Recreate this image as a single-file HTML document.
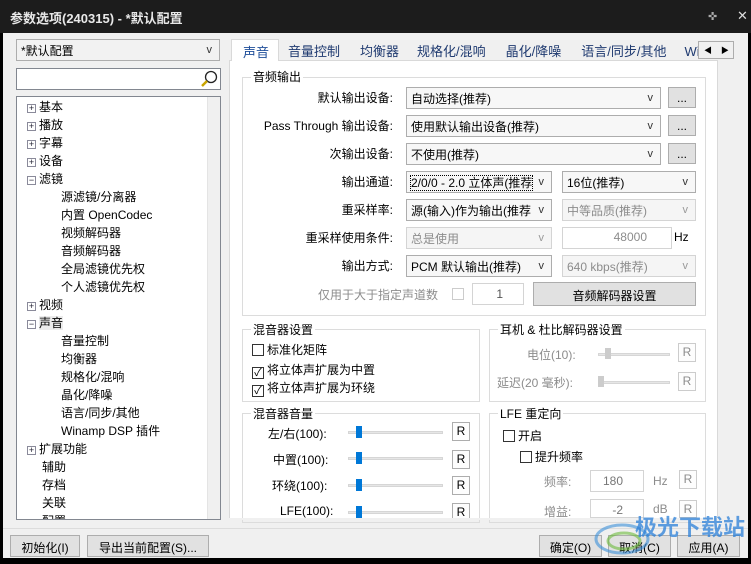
<!DOCTYPE html><html><head><meta charset="utf-8"><style>
*{box-sizing:border-box;margin:0;padding:0}
body{width:751px;height:564px;background:#000;font-family:"Liberation Sans","Noto Sans CJK SC",sans-serif;font-size:12px;color:#000;position:relative;overflow:hidden}
.a{position:absolute}
.win{left:3px;top:33px;width:745px;height:525px;background:#f0f0f0}
.title{left:0;top:0;width:751px;height:33px;background:#1c1c1c;color:#e8e8e8;font-weight:bold;font-size:13px;padding:8px 0 0 10px}
.box{background:#fff;border:1px solid #adadad}
.cb{background:#f7f7f7;border:1px solid #adadad;padding:2px 4px;white-space:nowrap;overflow:hidden}
.cb.d{color:#8c8c8c;border-color:#d4d4d4;background:#f5f5f5}
.cb .v{position:absolute;right:7px;top:4px;font-size:11px;color:#333}
.btn{background:#e1e1e1;border:1px solid #adadad;text-align:center;padding-top:3px}
.grp{border:1px solid #dcdcdc}
.gl{position:absolute;top:-9px;left:8px;background:#fff;padding:0 2px}
.lbl{text-align:right;width:160px}
.dis{color:#8c8c8c}
.chk{display:inline-block;width:12px;height:12px;border:1px solid #333;background:#fff;vertical-align:-2px;margin-right:3px;font-size:11px;line-height:10px;text-align:center}
.tr div{height:18px;line-height:18px;white-space:nowrap}
.pm{display:inline-block;width:9px;height:9px;border:1px solid #8a8a9a;font-size:9px;line-height:7px;text-align:center;color:#223;margin:0 3px 0 10px;vertical-align:0px}
.sl{height:3px;background:#e6e6e6;border:1px solid #d6d6d6}
.th{width:6px;height:12px;background:#0078d7}
.r{width:18px;height:19px;border:1px solid #adadad;background:#fdfdfd;text-align:center;line-height:17px}
</style></head><body>
<div class="a title">参数选项(240315) - *默认配置</div>
<div class="a" style="left:708px;top:10px;color:#aaa;font-size:11px">✜</div>
<div class="a" style="left:737px;top:8px;color:#ddd;font-size:13px">✕</div>
<div class="a win"></div>
<!-- left -->
<div class="a cb" style="left:16px;top:39px;width:204px;height:22px;background:#f2f2f2">*默认配置<span class="v">v</span></div>
<div class="a box" style="left:16px;top:68px;width:205px;height:22px;border-color:#828790"><svg class="a" style="right:2px;top:1px" width="18" height="18"><circle cx="11" cy="7" r="5.5" fill="none" stroke="#222" stroke-width="1.3"/><path d="M7 11 L2 16" stroke="#c9a400" stroke-width="2.5"/></svg></div>
<div class="a box tr" style="left:16px;top:96px;width:205px;height:424px;border-color:#828790;overflow:hidden;padding-top:1px">
<div><span class="pm">+</span>基本</div><div><span class="pm">+</span>播放</div><div><span class="pm">+</span>字幕</div><div><span class="pm">+</span>设备</div><div><span class="pm">−</span>滤镜</div>
<div style="padding-left:44px">源滤镜/分离器</div><div style="padding-left:44px">内置 OpenCodec</div><div style="padding-left:44px">视频解码器</div><div style="padding-left:44px">音频解码器</div><div style="padding-left:44px">全局滤镜优先权</div><div style="padding-left:44px">个人滤镜优先权</div>
<div><span class="pm">+</span>视频</div><div><span class="pm">−</span><span style="background:#ececec">声音</span></div>
<div style="padding-left:44px">音量控制</div><div style="padding-left:44px">均衡器</div><div style="padding-left:44px">规格化/混响</div><div style="padding-left:44px">晶化/降噪</div><div style="padding-left:44px">语言/同步/其他</div><div style="padding-left:44px">Winamp DSP 插件</div>
<div><span class="pm">+</span>扩展功能</div><div style="padding-left:25px">辅助</div><div style="padding-left:25px">存档</div><div style="padding-left:25px">关联</div><div style="padding-left:25px">配置</div>
<div class="a" style="right:0;top:0;width:13px;height:422px;background:#f0f0f0;border-left:1px solid #e4e4e4"></div>
</div>
<!-- tabs -->
<div class="a" style="left:229px;top:60px;width:489px;height:459px;background:#fff;border:1px solid #d9d9d9"></div>
<div class="a" style="left:231px;top:39px;width:48px;height:22px;background:#fff;border:1px solid #d9d9d9;border-bottom:none;padding:2px 0 0 11px;color:#1f4e9a;font-size:13px">声音</div>
<div class="a" style="left:288px;top:41px;font-size:13px;color:#1f3a70;white-space:nowrap;word-spacing:0"><span>音量控制</span><span style="margin-left:20px">均衡器</span><span style="margin-left:18px">规格化/混响</span><span style="margin-left:20px">晶化/降噪</span><span style="margin-left:20px">语言/同步/其他</span><span style="margin-left:18px">Wi</span></div>
<div class="a" style="left:698px;top:41px;width:36px;height:18px;background:#f0f0f0;border:1px solid #adadad;font-size:8px;padding:3px 0 0 5px">◀&nbsp;&nbsp;&nbsp;&nbsp;▶</div>
<div class="a" style="left:720px;top:62px;width:13px;height:456px;background:#f0f0f0"></div>
<!-- audio out group -->
<div class="a grp" style="left:242px;top:77px;width:464px;height:239px"><span class="gl" style="top:-10px">音频输出</span></div>
<div class="a lbl" style="left:233px;top:89px">默认输出设备:</div>
<div class="a lbl" style="left:233px;top:117px">Pass Through 输出设备:</div>
<div class="a lbl" style="left:233px;top:145px">次输出设备:</div>
<div class="a lbl" style="left:233px;top:173px">输出通道:</div>
<div class="a lbl" style="left:233px;top:201px">重采样率:</div>
<div class="a lbl" style="left:233px;top:229px">重采样使用条件:</div>
<div class="a lbl" style="left:233px;top:257px">输出方式:</div>
<div class="a cb" style="left:406px;top:87px;width:255px;height:22px">自动选择(推荐)<span class="v">v</span></div>
<div class="a cb" style="left:406px;top:115px;width:255px;height:22px">使用默认输出设备(推荐)<span class="v">v</span></div>
<div class="a cb" style="left:406px;top:143px;width:255px;height:22px">不使用(推荐)<span class="v">v</span></div>
<div class="a btn" style="left:668px;top:87px;width:28px;height:21px">...</div>
<div class="a btn" style="left:668px;top:115px;width:28px;height:21px">...</div>
<div class="a btn" style="left:668px;top:143px;width:28px;height:21px">...</div>
<div class="a cb" style="left:406px;top:171px;width:146px;height:22px"><span style="outline:1px dotted #000">2/0/0 - 2.0 立体声(推荐</span><span class="v" style="background:#f7f7f7;padding-left:6px">v</span></div>
<div class="a cb" style="left:562px;top:171px;width:134px;height:22px">16位(推荐)<span class="v">v</span></div>
<div class="a cb" style="left:406px;top:199px;width:146px;height:22px">源(输入)作为输出(推荐<span class="v" style="background:#f7f7f7;padding-left:6px">v</span></div>
<div class="a cb d" style="left:562px;top:199px;width:134px;height:22px">中等品质(推荐)<span class="v" style="color:#999">v</span></div>
<div class="a cb d" style="left:406px;top:227px;width:146px;height:22px">总是使用<span class="v" style="color:#999">v</span></div>
<div class="a cb d" style="left:562px;top:227px;width:110px;height:22px;background:#fff;text-align:right;padding-right:24px">48000</div>
<div class="a" style="left:674px;top:230px">Hz</div>
<div class="a cb" style="left:406px;top:255px;width:146px;height:22px">PCM 默认输出(推荐)<span class="v">v</span></div>
<div class="a cb d" style="left:562px;top:255px;width:134px;height:22px">640 kbps(推荐)<span class="v" style="color:#999">v</span></div>
<div class="a dis" style="left:318px;top:286px">仅用于大于指定声道数</div>
<div class="a" style="left:452px;top:288px;width:12px;height:12px;border:1px solid #ccc"></div>
<div class="a box" style="left:472px;top:283px;width:52px;height:22px;border-color:#d4d4d4;text-align:right;padding:3px 20px 0 0;color:#555">1</div>
<div class="a btn" style="left:533px;top:282px;width:163px;height:24px;padding-top:4px">音频解码器设置</div>
<!-- mixer -->
<div class="a grp" style="left:242px;top:329px;width:238px;height:73px"><span class="gl">混音器设置</span></div>
<div class="a" style="left:252px;top:341px"><span class="chk"></span>标准化矩阵</div>
<div class="a" style="left:252px;top:361px"><span class="chk">✓</span>将立体声扩展为中置</div>
<div class="a" style="left:252px;top:379px"><span class="chk">✓</span>将立体声扩展为环绕</div>
<div class="a grp" style="left:489px;top:329px;width:217px;height:73px"><span class="gl">耳机 &amp; 杜比解码器设置</span></div>
<div class="a dis" style="left:527px;top:346px">电位(10):</div>
<div class="a dis" style="left:497px;top:374px">延迟(20 毫秒):</div>
<div class="a sl" style="left:598px;top:353px;width:72px"></div><div class="a" style="left:605px;top:348px;width:6px;height:11px;background:#ccc"></div>
<div class="a sl" style="left:598px;top:381px;width:72px"></div><div class="a" style="left:598px;top:376px;width:6px;height:11px;background:#ccc"></div>
<div class="a r dis" style="left:678px;top:343px;border-color:#ccc">R</div>
<div class="a r dis" style="left:678px;top:372px;border-color:#ccc">R</div>
<div class="a grp" style="left:242px;top:413px;width:238px;height:110px"><span class="gl">混音器音量</span></div>
<div class="a" style="left:268px;top:425px">左/右(100):</div>
<div class="a" style="left:273px;top:451px">中置(100):</div>
<div class="a" style="left:272px;top:477px">环绕(100):</div>
<div class="a" style="left:280px;top:504px">LFE(100):</div>
<div class="a sl" style="left:348px;top:431px;width:95px"></div><div class="a th" style="left:356px;top:426px"></div>
<div class="a sl" style="left:348px;top:457px;width:95px"></div><div class="a th" style="left:356px;top:452px"></div>
<div class="a sl" style="left:348px;top:484px;width:95px"></div><div class="a th" style="left:356px;top:479px"></div>
<div class="a sl" style="left:348px;top:511px;width:95px"></div><div class="a th" style="left:356px;top:506px"></div>
<div class="a r" style="left:452px;top:422px">R</div><div class="a r" style="left:452px;top:450px">R</div><div class="a r" style="left:452px;top:476px">R</div><div class="a r" style="left:452px;top:503px;height:15px;border-bottom:none">R</div>
<div class="a grp" style="left:489px;top:413px;width:217px;height:110px"><span class="gl">LFE 重定向</span></div>
<div class="a" style="left:503px;top:427px"><span class="chk"></span>开启</div>
<div class="a" style="left:520px;top:448px"><span class="chk"></span>提升频率</div>
<div class="a dis" style="left:544px;top:473px">频率:</div>
<div class="a dis" style="left:544px;top:503px">增益:</div>
<div class="a box" style="left:590px;top:470px;width:54px;height:22px;border-color:#d4d4d4;text-align:right;padding:3px 20px 0 0;color:#777">180</div>
<div class="a box" style="left:590px;top:499px;width:54px;height:19px;border-color:#d4d4d4;text-align:right;padding:3px 20px 0 0;color:#777">-2</div>
<div class="a dis" style="left:653px;top:474px">Hz</div><div class="a dis" style="left:653px;top:502px">dB</div>
<div class="a r dis" style="left:679px;top:470px;border-color:#ccc">R</div><div class="a r dis" style="left:679px;top:500px;border-color:#ccc;height:18px">R</div>
<!-- bottom -->
<div class="a" style="left:229px;top:518px;width:505px;height:2px;background:#f0f0f0"></div>
<div class="a" style="left:3px;top:528px;width:745px;height:1px;background:#dcdcdc"></div>
<div class="a btn" style="left:10px;top:535px;width:70px;height:22px">初始化(I)</div>
<div class="a btn" style="left:87px;top:535px;width:122px;height:22px">导出当前配置(S)...</div>
<div class="a btn" style="left:539px;top:535px;width:63px;height:22px">确定(O)</div>
<div class="a btn" style="left:608px;top:535px;width:63px;height:22px">取消(C)</div>
<div class="a btn" style="left:677px;top:535px;width:63px;height:22px">应用(A)</div>
<svg class="a" style="left:592px;top:515px" width="60" height="48"><ellipse cx="30" cy="24" rx="26" ry="14" fill="none" stroke="#3a8fd8" stroke-width="3" opacity=".6"/><ellipse cx="32" cy="26" rx="16" ry="8" fill="none" stroke="#6cbb3c" stroke-width="3" opacity=".6"/></svg>
<div class="a" style="left:635px;top:510px;font-size:22px;font-weight:bold;color:#2a7fd8;opacity:.75">极光下载站</div>
</body></html>
